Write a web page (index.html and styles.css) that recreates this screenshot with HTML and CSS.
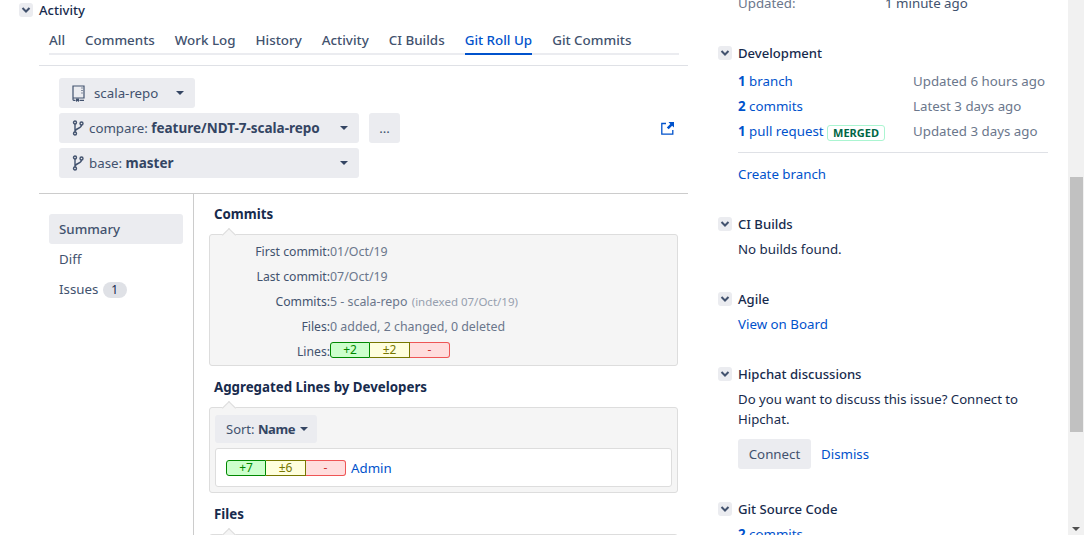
FILE: index.html
```html
<!DOCTYPE html>
<html lang="en">
<head>
  <meta charset="UTF-8" />
  <title>Git Roll Up</title>
  <link rel="stylesheet" href="styles.css">
</head>
<body>
  <div class="page">
    <main class="main">
      <div class="module-head">
        <span class="toggle"><svg width="10" height="10" viewBox="0 0 10 10"><path d="M1.500 3 5 6.500 8.500 3" fill="none" stroke="#42526e" stroke-width="2"/></svg></span>
        <h2>Activity</h2>
      </div>
      <nav class="tabs">
        <a>All</a><a>Comments</a><a>Work Log</a><a>History</a><a>Activity</a><a>CI Builds</a><a class="active">Git Roll Up</a><a>Git Commits</a>
      </nav>

      <div class="selectors">
        <button class="btn repo">
          <svg class="book" width="13" height="17" viewBox="0 0 13 17"><path d="M1 1h11v12H1zM1 13v1.500c0 .5.400.800.800.800h1.700M7.500 15.300H12M10 2.500v1M10 5v1M10 7.500v1" fill="none" stroke="#42526e" stroke-width="1.200"/><path d="M4 13.500h3V17l-1.500-1L4 17z" fill="#42526e"/></svg>
          <span class="btn-label">scala-repo</span><i class="caret"></i>
        </button>
        <div class="selector-row">
          <button class="btn branch">
            <svg width="12" height="16" viewBox="0 0 12 16"><g fill="none" stroke="#42526e" stroke-width="1.400"><circle cx="3" cy="2.500" r="1.500"/><circle cx="3" cy="13.500" r="1.500"/><circle cx="9.500" cy="3.500" r="1.500"/><path d="M3 4v8M9.500 5c0 4-6.500 3-6.500 6.500"/></g></svg>
            <span class="btn-label">compare: <b>feature/NDT-7-scala-repo</b></span><i class="caret"></i>
          </button>
          <button class="btn more">...</button>
          <svg class="ext" width="13" height="13" viewBox="0 0 13 13"><path d="M5 1.500H.8v10.700h11V8" fill="none" stroke="#0052cc" stroke-width="1.300"/><path d="M7.500 0H13v5.500l-1.900-1.800-3.400 3.600-1.900-1.900 3.500-3.500z" fill="#0052cc"/></svg>
        </div>
        <button class="btn branch">
          <svg width="12" height="16" viewBox="0 0 12 16"><g fill="none" stroke="#42526e" stroke-width="1.400"><circle cx="3" cy="2.500" r="1.500"/><circle cx="3" cy="13.500" r="1.500"/><circle cx="9.500" cy="3.500" r="1.500"/><path d="M3 4v8M9.500 5c0 4-6.500 3-6.500 6.500"/></g></svg>
          <span class="btn-label">base: <b>master</b></span><i class="caret"></i>
        </button>
      </div>

      <div class="rollup">
        <ul class="side-nav">
          <li class="current">Summary</li>
          <li>Diff</li>
          <li>Issues <span class="badge">1</span></li>
        </ul>
        <div class="content">
          <h3>Commits</h3>
          <div class="panel">
            <dl class="facts">
              <dt>First commit:</dt><dd>01/Oct/19</dd>
              <dt>Last commit:</dt><dd>07/Oct/19</dd>
              <dt>Commits:</dt><dd>5 - scala-repo <small>(indexed 07/Oct/19)</small></dd>
              <dt>Files:</dt><dd>0 added, 2 changed, 0 deleted</dd>
              <dt>Lines:</dt><dd><div class="lines"><span class="add">+2</span><span class="mod">±2</span><span class="del">-</span></div></dd>
            </dl>
          </div>

          <h3>Aggregated Lines by Developers</h3>
          <div class="panel devs">
            <button class="btn sort">Sort:&nbsp;<b>Name</b><i class="caret"></i></button>
            <div class="dev-box">
              <div class="lines"><span class="add">+7</span><span class="mod">±6</span><span class="del">-</span></div>
              <a class="link">Admin</a>
            </div>
          </div>

          <h3>Files</h3>
          <div class="panel"></div>
        </div>
      </div>
    </main>

    <aside class="sidebar">
      <div class="updated"><span>Updated:</span><span>1 minute ago</span></div>

      <section>
        <div class="module-head">
          <span class="toggle"><svg width="10" height="10" viewBox="0 0 10 10"><path d="M1.500 3 5 6.500 8.500 3" fill="none" stroke="#42526e" stroke-width="2"/></svg></span>
          <h2>Development</h2>
        </div>
        <div class="dev-rows">
          <div class="dev-row"><a class="link"><b>1</b> branch</a><span>Updated 6 hours ago</span></div>
          <div class="dev-row"><a class="link"><b>2</b> commits</a><span>Latest 3 days ago</span></div>
          <div class="dev-row"><a class="link"><b>1</b> pull request <em class="lozenge">MERGED</em></a><span>Updated 3 days ago</span></div>
        </div>
        <hr>
        <p><a class="link">Create branch</a></p>
      </section>

      <section>
        <div class="module-head">
          <span class="toggle"><svg width="10" height="10" viewBox="0 0 10 10"><path d="M1.500 3 5 6.500 8.500 3" fill="none" stroke="#42526e" stroke-width="2"/></svg></span>
          <h2>CI Builds</h2>
        </div>
        <p>No builds found.</p>
      </section>

      <section>
        <div class="module-head">
          <span class="toggle"><svg width="10" height="10" viewBox="0 0 10 10"><path d="M1.500 3 5 6.500 8.500 3" fill="none" stroke="#42526e" stroke-width="2"/></svg></span>
          <h2>Agile</h2>
        </div>
        <p><a class="link">View on Board</a></p>
      </section>

      <section>
        <div class="module-head">
          <span class="toggle"><svg width="10" height="10" viewBox="0 0 10 10"><path d="M1.500 3 5 6.500 8.500 3" fill="none" stroke="#42526e" stroke-width="2"/></svg></span>
          <h2>Hipchat discussions</h2>
        </div>
        <p class="wrap">Do you want to discuss this issue? Connect to Hipchat.</p>
        <div class="actions"><button class="btn connect">Connect</button><a class="link">Dismiss</a></div>
      </section>

      <section>
        <div class="module-head">
          <span class="toggle"><svg width="10" height="10" viewBox="0 0 10 10"><path d="M1.500 3 5 6.500 8.500 3" fill="none" stroke="#42526e" stroke-width="2"/></svg></span>
          <h2>Git Source Code</h2>
        </div>
        <p><a class="link"><b>2</b> commits</a></p>
      </section>
    </aside>

    <div class="scrollbar">
      <div class="thumb"></div>
      <i class="arrow"></i>
    </div>
  </div>
</body>
</html>
```

FILE: styles.css
```css
* {
  box-sizing: border-box;
}

html, body {
  margin: 0;
  height: 100%;
  overflow: hidden;
}

body {
  font-family: "Noto Sans", Arial, sans-serif;
  font-size: 13.3px;
  line-height: 20px;
  color: #172b4d;
  background: #fff;
}

.page {
  display: flex;
  height: 535px;
  overflow: hidden;
}

/* Left column */
.main {
  width: 698px;
  flex-shrink: 0;
  padding: 0 10px 0 20px;
}

.module-head {
  display: flex;
  align-items: center;
  height: 20px;
  gap: 6px;
}

.main > .module-head {
  margin-left: -1px;
}

.module-head h2 {
  margin: 0;
  font-size: 13.1px;
  font-weight: 500;
  color: #172b4d;
}

.toggle {
  width: 14px;
  height: 14px;
  border-radius: 3px;
  background: #ebecf0;
  display: flex;
  align-items: center;
  justify-content: center;
}

.tabs {
  display: flex;
  gap: 20px;
  margin: 10px 0 0 29px;
  width: 630px;
  height: 25px;
  border-bottom: 2px solid #ebecf0;
}

.tabs a {
  height: 25px;
  color: #42526e;
  font-size: 13.4px;
  font-weight: 500;
}

.tabs a.active {
  color: #0052cc;
  border-bottom: 2px solid #0052cc;
}

.selectors {
  margin: 10px 0 0 19px;
  padding: 12px 10px 15px 20px;
  border-top: 1px solid #dfe1e6;
  display: flex;
  flex-direction: column;
  align-items: flex-start;
  gap: 5px;
  width: 649px;
  border-bottom: 1px solid #ccc;
}

.selector-row {
  display: flex;
  align-items: center;
  width: 100%;
  gap: 10px;
}

.btn {
  height: 30px;
  border: none;
  border-radius: 3px;
  background: #ebecf0;
  color: #42526e;
  font: inherit;
  display: flex;
  align-items: center;
  padding: 0 11px 0 10px;
}

.btn b {
  font-size: 13.5px;
  color: #344563;
}

.repo {
  width: 136px;
  gap: 9px;
  padding-left: 13px;
}

.branch {
  width: 300px;
  gap: 5px;
  padding-left: 13px;
}

.btn-label {
  flex: 1;
  text-align: left;
  white-space: nowrap;
}

.caret {
  width: 0;
  height: 0;
  margin: 0 0 0 6px;
  border-left: 4px solid transparent;
  border-right: 4px solid transparent;
  border-top: 4px solid #344563;
}

.more {
  width: 31px;
  justify-content: center;
  padding: 0;
}

.ext {
  margin-left: auto;
  margin-right: 4px;
}

.rollup {
  display: flex;
  margin-left: 19px;
}

.side-nav {
  list-style: none;
  margin: 0;
  padding: 20px 10px 0;
  width: 155px;
  height: 400px;
  border-right: 1px solid #ccc;
  color: #42526e;
}

.side-nav li {
  height: 30px;
  padding: 5px 10px;
  border-radius: 3px;
}

.side-nav li.current {
  background: #ebecf0;
  font-weight: 500;
}

.badge {
  display: inline-block;
  width: 24px;
  height: 16px;
  margin-left: 1px;
  border-radius: 8px;
  background: #dfe1e6;
  text-align: center;
  font-size: 12px;
  line-height: 16px;
  color: #172b4d;
}

.content {
  padding-left: 15px;
  width: 484px;
  flex-shrink: 0;
}

.content h3 {
  margin: 11px 0 10px 5px;
  font-size: 13.3px;
  line-height: 20px;
  font-weight: 700;
}

.content h3:first-child {
  margin-top: 10px;
}

.panel {
  position: relative;
  background: #f5f5f5;
  border: 1px solid #ddd;
  border-radius: 3px;
  min-height: 40px;
}

/* little notch above a panel */
.panel::before {
  content: "";
  position: absolute;
  left: 14px;
  top: -5px;
  width: 9px;
  height: 9px;
  background: #f5f5f5;
  border-left: 1px solid #ddd;
  border-top: 1px solid #ddd;
  transform: rotate(45deg);
}

.facts {
  display: grid;
  grid-template-columns: 120px 1fr;
  grid-auto-rows: 25px;
  margin: 0;
  padding: 5px 0 0;
  font-size: 12.4px;
  color: #42526e;
}

.facts dt {
  font-size: 12.2px;
  text-align: right;
  line-height: 24px;
}

.facts dd {
  margin: 0;
  line-height: 24px;
  color: #6b778c;
}

.facts small {
  margin-left: 1px;
  font-size: 11.5px;
  color: #97a0af;
}

.facts .lines {
  margin-top: 2px;
}

.lines {
  display: flex;
  width: 120px;
  height: 16px;
  font-size: 12px;
  line-height: 14px;
  text-align: center;
}

.lines span {
  width: 40px;
  border: 1px solid;
}

.add {
  background: #cfc;
  border-color: #080 !important;
  border-radius: 3px 0 0 3px;
  color: #080;
}

.mod {
  background: #ffd;
  border-color: #770 !important;
  border-left: none !important;
  color: #770;
}

.del {
  background: #fdd;
  border-color: #e55 !important;
  border-left: none !important;
  border-radius: 0 3px 3px 0;
  color: #c33;
}

.devs {
  padding: 7px 5px 5px;
}

.sort {
  height: 28px;
  width: 102px;
  padding: 0 11px;
  font-size: 13px;
  color: #42526e;
}

.sort b {
  font-size: 13px;
  letter-spacing: -.4px;
}

.sort .caret {
  margin-left: 5px;
}

.dev-box {
  display: flex;
  align-items: center;
  gap: 5px;
  height: 39px;
  margin-top: 5px;
  padding: 0 10px;
  background: #fff;
  border: 1px solid #ddd;
  border-radius: 3px;
}

.link {
  color: #0052cc;
  text-decoration: none;
}

/* Right column */
.sidebar {
  width: 370px;
  flex-shrink: 0;
  padding: 0 20px;
  margin-top: -7px;
}

.updated {
  display: flex;
  margin-left: 20px;
  height: 20px;
  color: #6b778c;
}

.updated span:first-child {
  width: 147px;
}

.updated span:last-child {
  color: #42526e;
}

.sidebar section {
  margin-bottom: 30px;
}

.updated + section {
  margin-top: 30px;
}

.sidebar p {
  margin: 5px 0 0 20px;
}

.dev-rows {
  padding-top: 3px;
}

.dev-row {
  display: flex;
  height: 20px;
  margin: 5px 0 0 20px;
  white-space: nowrap;
}

.dev-row a {
  width: 175px;
}

.dev-row span {
  color: #6b778c;
}

.dev-row b, .sidebar p b {
  color: #0052cc;
}

.lozenge {
  display: inline-block;
  height: 16px;
  padding: 0 5px;
  margin-left: 0;
  border: 1px solid #abf5d1;
  border-radius: 3px;
  font-style: normal;
  font-size: 11px;
  font-weight: 700;
  line-height: 14px;
  color: #006644;
  vertical-align: -1px;
}

.sidebar hr {
  border: none;
  border-top: 1px solid #dfe1e6;
  margin: 11px 20px 0 20px;
  width: 310px;
}

.sidebar hr + p {
  margin-top: 11px;
}

.sidebar .wrap {
  width: 300px;
  font-size: 13.2px;
}

.actions {
  display: flex;
  align-items: center;
  gap: 10px;
  margin: 10px 0 0 20px;
}

.connect {
  width: 73px;
  justify-content: center;
  padding: 0;
}

.scrollbar {
  position: absolute;
  top: 0;
  right: 0;
  width: 16px;
  height: 535px;
  background: #f1f1f1;
}

.thumb {
  position: absolute;
  top: 177px;
  left: 2px;
  width: 13px;
  height: 255px;
  background: #c1c1c1;
}

.arrow {
  position: absolute;
  bottom: 4px;
  left: 4px;
  border-left: 4px solid transparent;
  border-right: 4px solid transparent;
  border-top: 4px solid #505050;
}
```
